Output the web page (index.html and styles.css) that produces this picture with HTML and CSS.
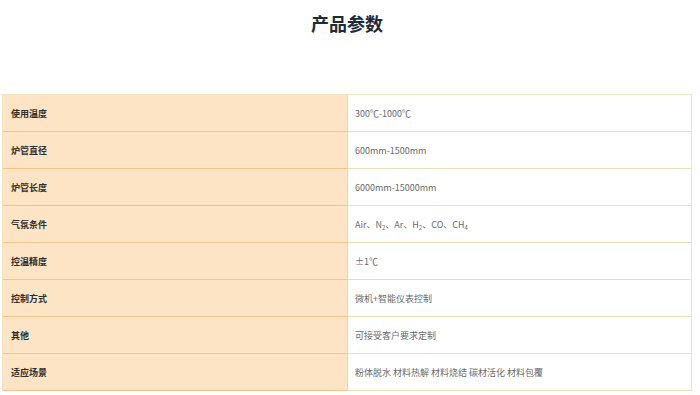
FILE: index.html
```html
<!DOCTYPE html>
<html lang="zh-CN">
<head>
<meta charset="utf-8">
<title>产品参数</title>
<link rel="stylesheet" href="styles.css">
</head>
<body>
<div class="page">
  <h1 class="title">产品参数</h1>
  <div class="spec">
    <div class="row"><div class="key">使用温度</div><div class="val"><span>300℃-1000℃</span></div></div>
    <div class="row"><div class="key">炉管直径</div><div class="val"><span>600mm-1500mm</span></div></div>
    <div class="row"><div class="key">炉管长度</div><div class="val"><span>6000mm-15000mm</span></div></div>
    <div class="row"><div class="key">气氛条件</div><div class="val"><span>Air、N<sub>2</sub>、Ar、H<sub>2</sub>、CO、CH<sub>4</sub></span></div></div>
    <div class="row"><div class="key">控温精度</div><div class="val"><span>±1℃</span></div></div>
    <div class="row"><div class="key">控制方式</div><div class="val"><span>微机+智能仪表控制</span></div></div>
    <div class="row"><div class="key">其他</div><div class="val"><span>可接受客户要求定制</span></div></div>
    <div class="row"><div class="key">适应场景</div><div class="val"><span>粉体脱水 材料热解 材料烧结 碳材活化 材料包覆</span></div></div>
  </div>
</div>
</body>
</html>
```
FILE: styles.css
```css
html, body {
  margin: 0;
  padding: 0;
  background: #ffffff;
}
body {
  font-family: "Noto Sans CJK SC", "Noto Sans", sans-serif;
}
.page {
  width: 690px;
  margin-left: 2px;
}
.title {
  margin: 0;
  padding-top: 10px;
  height: 94px;
  box-sizing: border-box;
  text-align: center;
  font-size: 18px;
  line-height: 26px;
  font-weight: 700;
  color: #1c2b3a;
}
.spec {
  border: 1px solid #f1e2c4;
  border-bottom: none;
  box-sizing: border-box;
}
.row {
  display: grid;
  grid-template-columns: 345px 1fr;
  height: 37px;
  border-bottom: 1px solid #efdcb8;
  box-sizing: border-box;
}
.key {
  background: #fde4c4;
  border-right: 1px solid #f3d2a6;
  border-bottom: 1px solid #f0c68c;
  margin-bottom: -1px;
  padding-left: 8px;
  display: flex;
  align-items: center;
  font-size: 9px;
  font-weight: 700;
  color: #2f2f2f;
}
.val {
  padding-left: 7px;
  display: flex;
  align-items: center;
  font-size: 9px;
  color: #6a6a6a;
}
.val sub {
  font-size: 6px;
  line-height: 0;
  vertical-align: -2px;
}
```
